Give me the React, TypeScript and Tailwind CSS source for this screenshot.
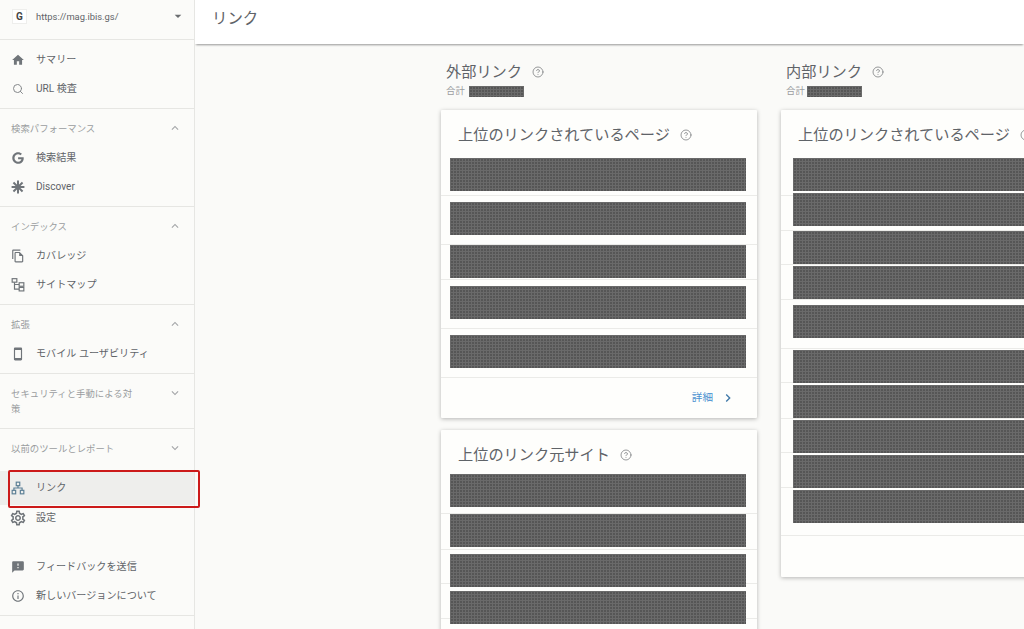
import { ReactNode } from "react";
import { CircleHelp, Search } from "lucide-react";
import { FaGoogle } from "react-icons/fa";
import {
  MdArrowDropDown,
  MdChevronRight,
  MdExpandLess,
  MdExpandMore,
  MdFeedback,
  MdHome,
  MdInfoOutline,
  MdOutlineFileCopy,
  MdOutlineSettings,
  MdOutlineSmartphone,
} from "react-icons/md";

function DiscoverIcon() {
  return (
    <svg viewBox="0 0 24 24" className="w-[14px] h-[14px]" fill="none" stroke="currentColor" strokeWidth="3.4">
      <path d="M12 1v22M1 12h22M4.2 4.2l15.6 15.6M19.8 4.2L4.2 19.8" />
    </svg>
  );
}

function SitemapIcon() {
  return (
    <svg viewBox="0 0 24 24" className="w-[15px] h-[15px]" fill="none" stroke="currentColor" strokeWidth="2">
      <rect x="2" y="2" width="8" height="6" />
      <rect x="14" y="9" width="8" height="6" />
      <rect x="14" y="17" width="8" height="6" />
      <path d="M6 8v12h8M6 12h8" />
    </svg>
  );
}

function LinkTreeIcon() {
  return (
    <svg viewBox="0 0 24 24" className="w-[16px] h-[16px] text-[#5b7f95]" fill="none" stroke="currentColor" strokeWidth="2">
      <rect x="9" y="2" width="6" height="6" />
      <rect x="2" y="16" width="6" height="6" />
      <rect x="16" y="16" width="6" height="6" />
      <path d="M12 8v4M5 16v-4h14v4" />
    </svg>
  );
}

function NavItem({ icon, label, className = "h-[29px]" }: { icon: ReactNode; label: string; className?: string }) {
  return (
    <div className={`flex items-center pl-[11px] text-[10.1px] text-[#5f6368] ${className}`}>
      <span className="w-[14px] flex items-center justify-center shrink-0 text-[#70757a] text-[14px]">{icon}</span>
      <span className="ml-[11px] whitespace-nowrap">{label}</span>
    </div>
  );
}

function SectionHead({ label, open = true, tall = false }: { label: string; open?: boolean; tall?: boolean }) {
  return (
    <div className={`flex items-start justify-between pt-[7px] pl-[11px] pr-[12px] text-[9.4px] leading-[15px] text-[#9a9d9f] ${tall ? "h-[44px]" : "h-[29px]"}`}>
      <span className="w-[128px]">{label}</span>
      {open ? <MdExpandLess className="text-[14px] text-[#a4a6a8]" /> : <MdExpandMore className="text-[14px] text-[#a4a6a8]" />}
    </div>
  );
}

function Sidebar() {
  return (
    <aside className="relative z-10 w-[195px] h-[629px] shrink-0 border-r border-[#e6e6e3] bg-[#fbfbf9]">
      <div className="h-[40px] border-b border-[#e6e6e3] flex items-start pt-[9px] pl-[12px] pr-[8px]">
        <span className="w-[15px] h-[15px] bg-white border border-[#eeeeec] flex items-center justify-center text-[10px] font-bold text-[#444]">G</span>
        <span className="ml-[9px] text-[9.4px] leading-[15px] text-[#5f6368] flex-1">https://mag.ibis.gs/</span>
        <MdArrowDropDown className="text-[16px] text-[#6a6d70] -mt-px" />
      </div>

      <div className="py-[5px] border-b border-[#e6e6e3]">
        <NavItem icon={<MdHome />} label="サマリー" />
        <NavItem icon={<Search className="w-[12px] h-[12px] text-[#85888b]" strokeWidth={2} />} label="URL 検査" />
      </div>

      <div className="py-[5px] border-b border-[#e6e6e3]">
        <SectionHead label="検索パフォーマンス" />
        <NavItem icon={<FaGoogle className="text-[12px]" />} label="検索結果" />
        <NavItem icon={<DiscoverIcon />} label="Discover" />
      </div>

      <div className="py-[5px] border-b border-[#e6e6e3]">
        <SectionHead label="インデックス" />
        <NavItem icon={<MdOutlineFileCopy />} label="カバレッジ" />
        <NavItem icon={<SitemapIcon />} label="サイトマップ" />
      </div>

      <div className="py-[5px] border-b border-[#e6e6e3]">
        <SectionHead label="拡張" />
        <NavItem icon={<MdOutlineSmartphone />} label="モバイル ユーザビリティ" />
      </div>

      <div className="py-[5px] border-b border-[#e6e6e3]">
        <SectionHead label="セキュリティと手動による対策" open={false} tall />
      </div>

      <div className="pt-[5px]">
        <SectionHead label="以前のツールとレポート" open={false} />
      </div>

      <div className="relative mt-[8px] bg-[#eeeeec]">
        <NavItem icon={<LinkTreeIcon />} label="リンク" className="h-[34px]" />
        {/* red annotation box from the screenshot */}
        <div className="absolute left-[8px] -right-[6px] -top-[1px] -bottom-[3px] border-2 border-[#cc1a1a] rounded-[2px]" />
      </div>
      <NavItem icon={<MdOutlineSettings className="shrink-0 w-[18px] h-[18px]" />} label="設定" className="h-[25px]" />

      <div className="mt-[22px] pb-[5px] border-b border-[#e6e6e3]">
        <NavItem icon={<MdFeedback />} label="フィードバックを送信" />
        <NavItem icon={<MdInfoOutline />} label="新しいバージョンについて" />
      </div>

      <div className="pt-[5px]">
        <NavItem icon={<MdInfoOutline />} label="プライバシー" />
      </div>
    </aside>
  );
}

function Help() {
  return <CircleHelp className="w-[12px] h-[12px] text-[#7c7f82] shrink-0" strokeWidth={1.6} />;
}

// redaction block painted over the real value
const redacted =
  "bg-[#565656] bg-[linear-gradient(90deg,#6a6a6a_1px,transparent_1px),linear-gradient(#6a6a6a_1px,transparent_1px)] bg-size-[3px_3px]";

type Row = { row: string; bar?: string };

function Card({ title, rows, barClass, footer, className = "" }: { title: string; rows: Row[]; barClass: string; footer?: ReactNode; className?: string }) {
  return (
    <section className={`bg-[#fefefc] rounded-[1px] shadow-[0_1px_4px_rgba(0,0,0,0.28)] ${className}`}>
      <div className="h-[36px] pt-[14px] pl-[17px] flex items-center gap-[10px] text-[15.2px] leading-[20px] text-[#5f6368]">
        <span className="whitespace-nowrap">{title}</span>
        <Help />
      </div>
      {rows.map((r, i) => (
        <div key={i} className={`relative border-b border-[#ebebe8] ${r.row}`}>
          {r.bar && <div className={`absolute h-[33px] ${barClass} ${r.bar} ${redacted}`} />}
        </div>
      ))}
      {footer}
    </section>
  );
}

const leftBar = "left-[9px] w-[296px]";
const rightBar = "left-[12px] right-0";

const externalPages: Row[] = [
  { row: "h-[50px]", bar: "top-[12px]" },
  { row: "h-[49px]", bar: "top-[6px]" },
  { row: "h-[35px]", bar: "top-0" },
  { row: "h-[49px]", bar: "top-[6px]" },
  { row: "h-[49px]", bar: "top-[6px]" },
];

const externalSites: Row[] = [
  { row: "h-[48px]", bar: "top-[8px]" },
  { row: "h-[36px]", bar: "top-0" },
  { row: "h-[34px]", bar: "top-[4px]" },
  { row: "h-[35px]", bar: "top-[7px]" },
  { row: "h-[49px]" },
];

const internalPages: Row[] = [
  { row: "h-[50px]", bar: "top-[12px]" },
  { row: "h-[35px]", bar: "-top-[3px]" },
  { row: "h-[34px]", bar: "top-0" },
  { row: "h-[35px]", bar: "top-[1px]" },
  { row: "h-[49px]", bar: "top-[5px]" },
  { row: "h-[34px]", bar: "top-[1px]" },
  { row: "h-[36px]", bar: "top-[2px]" },
  { row: "h-[34px]", bar: "top-[1px]" },
  { row: "h-[35px]", bar: "top-[2px]" },
  { row: "h-[48px]", bar: "top-[2px]" },
];

function ColumnHead({ title, gap }: { title: string; gap: string }) {
  return (
    <div className="pl-[5px] mb-[13px]">
      <div className="h-[20px] flex items-center gap-[10px] text-[15.2px] text-[#5f6368]">
        <span>{title}</span>
        <Help />
      </div>
      <div className={`mt-[3px] h-[12px] flex items-center text-[9.4px] text-[#9a9d9f] ${gap}`}>
        <span>合計</span>
        <span className={`w-[55px] h-[11px] ${redacted}`} />
      </div>
    </div>
  );
}

export default function App() {
  return (
    <div className="flex w-[1024px] h-[629px] overflow-hidden bg-[#fafaf8] font-['Roboto','Noto_Sans_CJK_JP',sans-serif]">
      <Sidebar />
      <div className="flex-1 min-w-0">
        <header className="h-[44px] bg-white pl-[17px] pt-[7px] text-[15.4px] leading-[20px] text-[#5f6368] shadow-[0_2px_2px_-1px_rgba(0,0,0,0.4)] relative">
          <span className="relative top-[2px]">リンク</span>
        </header>
        <main className="flex gap-[24px] pl-[246px] pt-[18px]">
          <div className="w-[316px] shrink-0">
            <ColumnHead title="外部リンク" gap="gap-[4px]" />
            <Card
              title="上位のリンクされているページ"
              rows={externalPages}
              barClass={leftBar}
              footer={
                <div className="h-[40px] flex items-center justify-end pr-[21px] text-[10.6px] text-[#4a90d0]">
                  <span>詳細</span>
                  <MdChevronRight className="ml-[7px] text-[16px] text-[#3f78a8]" />
                </div>
              }
            />
            <Card title="上位のリンク元サイト" rows={externalSites} barClass={leftBar} className="mt-[12px]" />
          </div>
          <div className="w-[316px] shrink-0">
            <ColumnHead title="内部リンク" gap="gap-[2px]" />
            <Card
              title="上位のリンクされているページ"
              rows={internalPages}
              barClass={rightBar}
              footer={<div className="h-[41px]" />}
            />
          </div>
        </main>
      </div>
    </div>
  );
}
